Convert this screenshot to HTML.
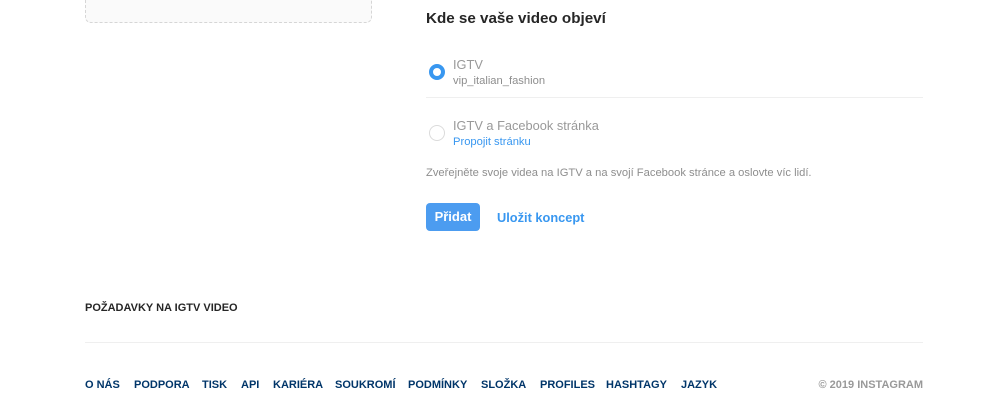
<!DOCTYPE html>
<html><head><meta charset="utf-8"><style>
*{margin:0;padding:0;box-sizing:border-box}
body{width:993px;height:406px;background:#fff;font-family:"Liberation Sans",Arial,sans-serif;position:relative;overflow:hidden}
.a{position:absolute;white-space:nowrap}
.box{position:absolute;left:85px;top:-10px;width:287px;height:33px;background:#fafafa;border:1px dashed #d6d6d6;border-radius:6px}
h2{font-size:15.2px;font-weight:bold;color:#262626}
.radio{position:absolute;width:16px;height:16px;border-radius:50%}
.f{font-size:11px;font-weight:bold;color:#003569;top:379px}
</style></head><body>
<div class="box"></div>
<h2 class="a" style="left:426px;top:10px">Kde se vaše video objeví</h2>
<div class="radio" style="left:429px;top:64px;border:4.5px solid #3897f0"></div>
<div class="a" style="left:453px;top:57px;font-size:12.8px;color:#999">IGTV</div>
<div class="a" style="left:453px;top:75px;font-size:11.2px;color:#8e8e8e">vip_italian_fashion</div>
<div class="a" style="left:426px;top:97px;width:497px;height:1px;background:#efefef"></div>
<div class="radio" style="left:429px;top:125px;border:1px solid #dbdbdb"></div>
<div class="a" style="left:453px;top:118px;font-size:12.8px;color:#999">IGTV a Facebook stránka</div>
<div class="a" style="left:453px;top:136px;font-size:11.2px;color:#3897f0">Propojit stránku</div>
<div class="a" style="left:426px;top:167px;font-size:11.2px;color:#8e8e8e">Zveřejněte svoje videa na IGTV a na svojí Facebook stránce a oslovte víc lidí.</div>
<div class="a" style="left:426px;top:203px;width:54px;height:28px;background:#4c9cf0;border-radius:4px;color:#fff;font-size:13px;font-weight:bold;line-height:28px;text-align:center">Přidat</div>
<div class="a" style="left:497px;top:210px;font-size:12.8px;font-weight:bold;color:#3897f0">Uložit koncept</div>
<div class="a" style="left:85px;top:302px;font-size:11px;font-weight:bold;color:#262626">POŽADAVKY NA IGTV VIDEO</div>
<div class="a" style="left:85px;top:342px;width:838px;height:1px;background:#efefef"></div>
<div class="a f" style="left:85px">O NÁS</div>
<div class="a f" style="left:134px">PODPORA</div>
<div class="a f" style="left:202px">TISK</div>
<div class="a f" style="left:241px">API</div>
<div class="a f" style="left:273px">KARIÉRA</div>
<div class="a f" style="left:335px">SOUKROMÍ</div>
<div class="a f" style="left:408px">PODMÍNKY</div>
<div class="a f" style="left:481px">SLOŽKA</div>
<div class="a f" style="left:540px">PROFILES</div>
<div class="a f" style="left:606px">HASHTAGY</div>
<div class="a f" style="left:681px">JAZYK</div>
<div class="a f" style="right:70px;color:#999">© 2019 INSTAGRAM</div>
</body></html>
